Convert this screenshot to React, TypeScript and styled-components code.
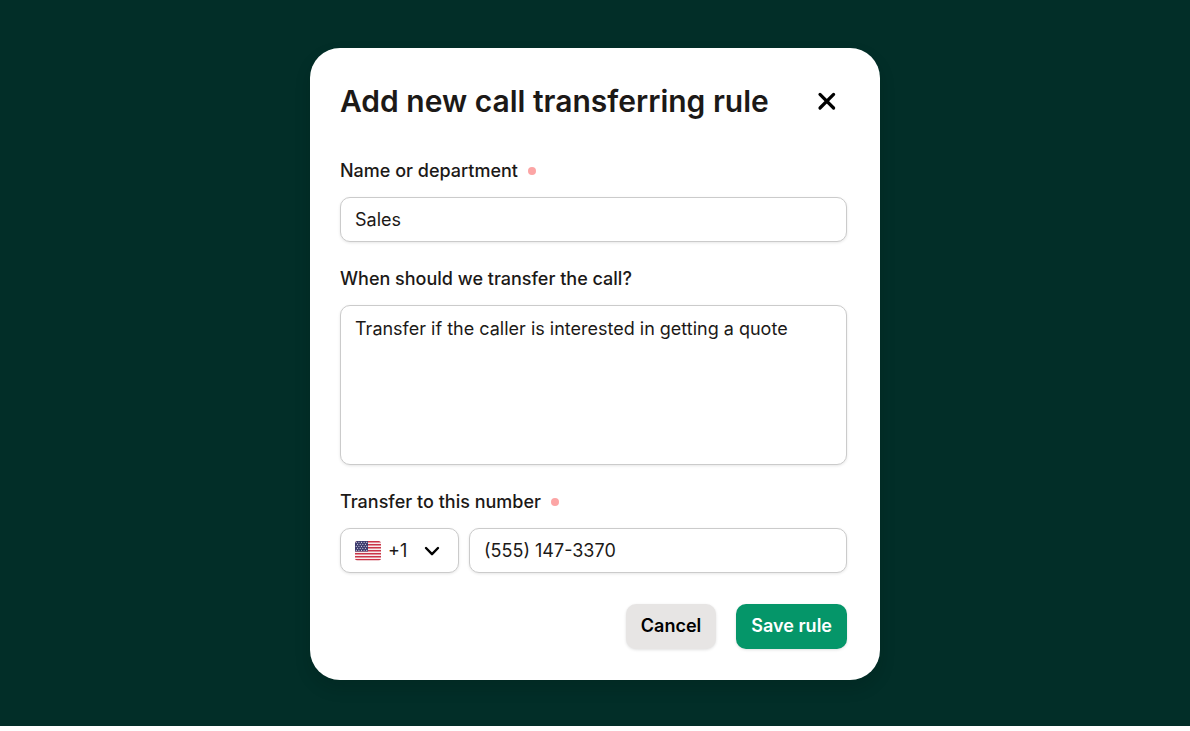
import React from 'react';
import styled, { createGlobalStyle, css } from 'styled-components';

const GlobalStyle = createGlobalStyle`
  *, *::before, *::after { box-sizing: border-box; }
  body {
    margin: 0;
    background: #ffffff;
    font-family: Inter, "Liberation Sans", sans-serif;
    color: #1c1917;
  }
  button, input, textarea, select { font: inherit; color: inherit; }
`;

const Backdrop = styled.main`
  display: flex;
  justify-content: center;
  align-items: flex-start;
  padding: 48px 24px 46px;
  background: #022e28;
`;

const Dialog = styled.form`
  width: 100%;
  max-width: 570px;
  padding: 33px 33px 31px 30px;
  border-radius: 30px;
  background: #ffffff;
  box-shadow: 0 8px 16px rgba(0, 20, 10, 0.16);
`;

const Header = styled.header`
  display: flex;
  align-items: center;
  justify-content: space-between;
  margin-bottom: 39px;
`;

const Title = styled.h1`
  margin: 0;
  font-size: 30px;
  font-weight: 600;
  line-height: 40px;
  font-optical-sizing: none;
`;

const CloseButton = styled.button`
  display: flex;
  align-items: center;
  justify-content: center;
  width: 40px;
  height: 40px;
  padding: 0;
  border: 0;
  background: none;
  color: #000000;
  cursor: pointer;
`;

const Field = styled.div`
  display: flex;
  flex-direction: column;
  gap: 15px;
  margin-bottom: 26px;
`;

const Label = styled.label`
  display: flex;
  align-items: center;
  gap: 10px;
  font-size: 18px;
  font-weight: 500;
  line-height: 22px;
`;

const RequiredDot = styled.span`
  width: 8px;
  height: 8px;
  border-radius: 50%;
  background: #fca5a5;
`;

const control = css`
  width: 100%;
  border: 1px solid #cbcbcb;
  border-radius: 10px;
  background: #ffffff;
  box-shadow: 0 1px 3px rgba(0, 0, 0, 0.1);
  font-size: 18px;
  line-height: 24px;
`;

const TextInput = styled.input`
  ${control}
  min-width: 0;
  height: 45px;
  padding: 0 14px;
`;

const TextArea = styled.textarea`
  ${control}
  display: block;
  height: 160px;
  padding: 11px 14px;
  resize: none;
`;

const PhoneRow = styled.div`
  display: flex;
  gap: 10px;
`;

const CountryPicker = styled.div`
  position: relative;
  flex: 0 0 119px;
`;

const CountrySelect = styled.select`
  ${control}
  height: 45px;
  padding: 0 40px 0 47px;
  appearance: none;
  cursor: pointer;
`;

const PickerIcon = styled.span<{ $side: 'left' | 'right' }>`
  position: absolute;
  top: 0;
  bottom: 0;
  ${({ $side }) => $side}: 15px;
  display: flex;
  align-items: center;
  color: #000000;
  pointer-events: none;
`;

const Actions = styled.footer`
  display: flex;
  justify-content: flex-end;
  gap: 20px;
  padding-top: 5px;
`;

const Button = styled.button<{ $primary?: boolean }>`
  height: 45px;
  padding: 0 15px 2px;
  border: 0;
  border-radius: 10px;
  background: ${({ $primary }) => ($primary ? '#059669' : '#e7e5e4')};
  color: ${({ $primary }) => ($primary ? '#ffffff' : '#000000')};
  box-shadow: 0 1px 3px rgba(0, 0, 0, 0.12);
  font-size: 18px;
  font-weight: 600;
  line-height: 24px;
  cursor: pointer;
`;

const stripes = [0, 1, 2, 3, 4, 5, 6];
const starRows = [0, 1, 2, 3, 4];

const UsFlag = () => (
  <svg width="26" height="20" viewBox="0 0 26 20" aria-hidden="true">
    <clipPath id="flag-shape">
      <rect width="26" height="19.5" rx="2.5" />
    </clipPath>
    <g clipPath="url(#flag-shape)">
      <rect width="26" height="19.5" fill="#f7eeee" />
      {stripes.map((i) => (
        <rect key={i} y={i * 3} width="26" height="1.5" fill="#cb3548" />
      ))}
      <rect width="13" height="10.5" fill="#3c3b6e" />
      {starRows.map((row) =>
        [0, 1, 2, 3, 4].slice(row % 2).map((col) => (
          <circle
            key={`${row}-${col}`}
            cx={1.3 + col * 2.6 - (row % 2) * 1.3}
            cy={1.3 + row * 2}
            r="0.55"
            fill="#ffffff"
          />
        )),
      )}
    </g>
  </svg>
);

const CloseIcon = () => (
  <svg width="20" height="20" viewBox="0 0 20 20" fill="none" stroke="currentColor" strokeWidth="3.2" strokeLinecap="round" aria-hidden="true">
    <path d="M3 3.4l13.6 13.6M16.6 3.4L3 17" />
  </svg>
);

const ChevronIcon = () => (
  <svg width="22" height="20" viewBox="0 0 22 20" fill="none" stroke="currentColor" strokeWidth="2.4" strokeLinecap="round" strokeLinejoin="round" aria-hidden="true">
    <path d="M4 7l6 6.2L16 7" />
  </svg>
);

export default function App() {
  return (
    <>
      <GlobalStyle />
      <Backdrop>
        <Dialog role="dialog" aria-labelledby="dialog-title" onSubmit={(e) => e.preventDefault()}>
          <Header>
            <Title id="dialog-title">Add new call transferring rule</Title>
            <CloseButton type="button" aria-label="Close">
              <CloseIcon />
            </CloseButton>
          </Header>
          <Field>
            <Label htmlFor="name">
              Name or department <RequiredDot />
            </Label>
            <TextInput id="name" defaultValue="Sales" required />
          </Field>
          <Field>
            <Label htmlFor="condition">When should we transfer the call?</Label>
            <TextArea id="condition" defaultValue="Transfer if the caller is interested in getting a quote" />
          </Field>
          <Field>
            <Label htmlFor="phone">
              Transfer to this number <RequiredDot />
            </Label>
            <PhoneRow>
              <CountryPicker>
                <CountrySelect aria-label="Country code" defaultValue="us">
                  <option value="us">+1</option>
                </CountrySelect>
                <PickerIcon $side="left">
                  <UsFlag />
                </PickerIcon>
                <PickerIcon $side="right">
                  <ChevronIcon />
                </PickerIcon>
              </CountryPicker>
              <TextInput id="phone" type="tel" defaultValue="(555) 147-3370" required />
            </PhoneRow>
          </Field>
          <Actions>
            <Button type="button">Cancel</Button>
            <Button type="submit" $primary>
              Save rule
            </Button>
          </Actions>
        </Dialog>
      </Backdrop>
    </>
  );
}
